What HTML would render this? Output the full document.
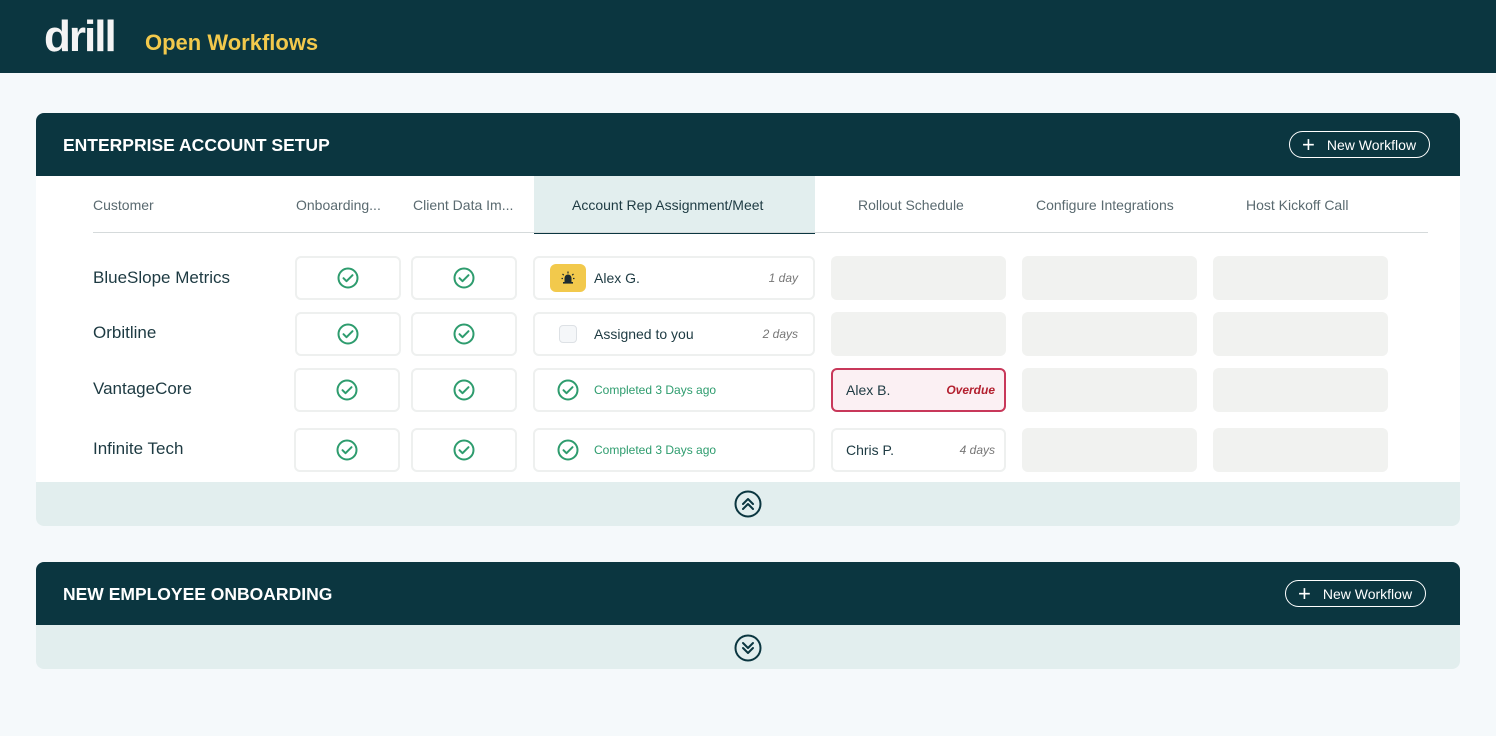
<!DOCTYPE html>
<html><head><style>
*{margin:0;padding:0;box-sizing:border-box}
body{width:1496px;height:736px;background:#f5f9fb;font-family:"Liberation Sans",sans-serif;position:relative;overflow:hidden;color:#1d3a42}
.a{position:absolute}
.top{left:0;top:0;width:1496px;height:73px;background:#0b3640}
.card{background:#fff;border-radius:8px;overflow:hidden}
.hd{background:#0b3640;color:#fff;font-weight:bold;font-size:19px;letter-spacing:.2px}
.btn{border:1.5px solid #fff;border-radius:14px;color:#fff;font-size:14px;height:27px;display:flex;align-items:center;padding-left:12px}
.th{font-size:14px;color:#5a6a70;top:176px;height:58px;line-height:58px}
.box{border:2px solid #eef0ef;border-radius:6px;background:#fff;display:flex;align-items:center;justify-content:center}
.e{background:#f1f2f0;border-radius:6px}
.lbl{font-size:17px;color:#1d3a42}
.sm{font-size:12px;font-style:italic;color:#777}
.band{background:#e2eeee}
</style></head><body>
<div class="a top"></div>
<div class="a" style="left:44px;top:12px;font-size:44px;font-weight:bold;color:#f4f4f4;letter-spacing:-2px">drill</div>
<div class="a" style="left:145px;top:30px;font-size:22px;font-weight:bold;color:#f2c94c">Open Workflows</div>

<div class="a card" style="left:36px;top:113px;width:1424px;height:413px"></div>
<div class="a hd" style="left:36px;top:113px;width:1424px;height:63px;border-radius:8px 8px 0 0"></div>
<div class="a" style="left:63px;top:135px;color:#fff;font-weight:bold;font-size:17.5px">ENTERPRISE ACCOUNT SETUP</div>
<div class="a btn" style="left:1289px;top:131px;width:141px"><span style="font-size:22px;font-weight:300;margin-right:12px;line-height:1">+</span>New Workflow</div>

<div class="a" style="left:534px;top:176px;width:281px;height:58px;background:#e2eeee;border-bottom:2px solid #0b3640"></div>
<div class="a" style="left:93px;top:232px;width:1335px;height:1px;background:#d5dadb"></div>
<div class="a th" style="left:93px">Customer</div>
<div class="a th" style="left:296px">Onboarding...</div>
<div class="a th" style="left:413px">Client Data Im...</div>
<div class="a th" style="left:572px;color:#1d3a42">Account Rep Assignment/Meet</div>
<div class="a th" style="left:858px">Rollout Schedule</div>
<div class="a th" style="left:1036px">Configure Integrations</div>
<div class="a th" style="left:1246px">Host Kickoff Call</div>

<svg width="0" height="0" style="position:absolute"><defs><g id="ck"><circle cx="11" cy="11" r="9.5" fill="none" stroke="#2e9c6e" stroke-width="2"/><path d="M6.5 11.2l3 3 6-6" fill="none" stroke="#2e9c6e" stroke-width="2" stroke-linecap="round" stroke-linejoin="round"/></g></defs></svg>

<div class="a lbl" style="left:93px;top:268px">BlueSlope Metrics</div>
<div class="a lbl" style="left:93px;top:323px">Orbitline</div>
<div class="a lbl" style="left:93px;top:379px">VantageCore</div>
<div class="a lbl" style="left:93px;top:439px">Infinite Tech</div>

<div class="a box" style="left:295px;top:256px;width:106px;height:44px"><svg width="22" height="22"><use href="#ck"/></svg></div>
<div class="a box" style="left:411px;top:256px;width:106px;height:44px"><svg width="22" height="22"><use href="#ck"/></svg></div>
<div class="a box" style="left:295px;top:312px;width:106px;height:44px"><svg width="22" height="22"><use href="#ck"/></svg></div>
<div class="a box" style="left:411px;top:312px;width:106px;height:44px"><svg width="22" height="22"><use href="#ck"/></svg></div>
<div class="a box" style="left:294px;top:368px;width:106px;height:44px"><svg width="22" height="22"><use href="#ck"/></svg></div>
<div class="a box" style="left:411px;top:368px;width:106px;height:44px"><svg width="22" height="22"><use href="#ck"/></svg></div>
<div class="a box" style="left:294px;top:428px;width:106px;height:44px"><svg width="22" height="22"><use href="#ck"/></svg></div>
<div class="a box" style="left:411px;top:428px;width:106px;height:44px"><svg width="22" height="22"><use href="#ck"/></svg></div>

<div class="a box" style="left:533px;top:256px;width:282px;height:44px;justify-content:flex-start">
 <div style="margin-left:15px;width:36px;height:28px;background:#f2c94c;border-radius:6px;display:flex;align-items:center;justify-content:center"><svg width="16" height="16" viewBox="0 0 16 16"><path d="M4.5 12V8a3.5 3.5 0 0 1 7 0v4z" fill="#1d2b30"/><rect x="3" y="12" width="10" height="1.6" fill="#1d2b30"/><path d="M8 1.5v2M2.5 4l1.3 1.2M13.5 4l-1.3 1.2M1.5 8.5h1.5M13 8.5h1.5" stroke="#1d2b30" stroke-width="1.2"/></svg></div>
 <span style="margin-left:8px;font-size:14px">Alex G.</span><span class="sm" style="margin-left:auto;margin-right:15px">1 day</span></div>
<div class="a box" style="left:533px;top:312px;width:282px;height:44px;justify-content:flex-start">
 <div style="margin-left:24px;width:18px;height:18px;border:1.5px solid #dde1e5;border-radius:4px;background:#f5f7f9"></div>
 <span style="margin-left:17px;font-size:14px">Assigned to you</span><span class="sm" style="margin-left:auto;margin-right:15px">2 days</span></div>
<div class="a box" style="left:533px;top:368px;width:282px;height:44px;justify-content:flex-start">
 <svg width="22" height="22" style="margin-left:22px"><use href="#ck"/></svg><span style="margin-left:15px;font-size:12px;color:#2e9c6e">Completed 3 Days ago</span></div>
<div class="a box" style="left:533px;top:428px;width:282px;height:44px;justify-content:flex-start">
 <svg width="22" height="22" style="margin-left:22px"><use href="#ck"/></svg><span style="margin-left:15px;font-size:12px;color:#2e9c6e">Completed 3 Days ago</span></div>

<div class="a e" style="left:831px;top:256px;width:175px;height:44px"></div>
<div class="a e" style="left:831px;top:312px;width:175px;height:44px"></div>
<div class="a box" style="left:831px;top:368px;width:175px;height:44px;background:#fbf0f3;border-color:#c8385a;justify-content:flex-start"><span style="margin-left:13px;font-size:14px">Alex B.</span><span style="margin-left:auto;margin-right:9px;font-size:12px;font-weight:bold;font-style:italic;color:#b3202f">Overdue</span></div>
<div class="a box" style="left:831px;top:428px;width:175px;height:44px;justify-content:flex-start"><span style="margin-left:13px;font-size:14px">Chris P.</span><span class="sm" style="margin-left:auto;margin-right:9px">4 days</span></div>

<div class="a e" style="left:1022px;top:256px;width:175px;height:44px"></div>
<div class="a e" style="left:1022px;top:312px;width:175px;height:44px"></div>
<div class="a e" style="left:1022px;top:368px;width:175px;height:44px"></div>
<div class="a e" style="left:1022px;top:428px;width:175px;height:44px"></div>
<div class="a e" style="left:1213px;top:256px;width:175px;height:44px"></div>
<div class="a e" style="left:1213px;top:312px;width:175px;height:44px"></div>
<div class="a e" style="left:1213px;top:368px;width:175px;height:44px"></div>
<div class="a e" style="left:1213px;top:428px;width:175px;height:44px"></div>

<div class="a band" style="left:36px;top:482px;width:1424px;height:44px;border-radius:0 0 8px 8px"></div>
<svg class="a" style="left:734px;top:490px" width="28" height="28" viewBox="0 0 28 28"><circle cx="14" cy="14" r="12.5" fill="none" stroke="#0b3640" stroke-width="2"/><path d="M9 14l5-5 5 5M9 19l5-5 5 5" fill="none" stroke="#0b3640" stroke-width="2" stroke-linecap="round" stroke-linejoin="round"/></svg>

<div class="a hd" style="left:36px;top:562px;width:1424px;height:63px;border-radius:8px 8px 0 0"></div>
<div class="a" style="left:63px;top:584px;color:#fff;font-weight:bold;font-size:17.5px">NEW EMPLOYEE ONBOARDING</div>
<div class="a btn" style="left:1285px;top:580px;width:141px"><span style="font-size:22px;font-weight:300;margin-right:12px;line-height:1">+</span>New Workflow</div>
<div class="a band" style="left:36px;top:625px;width:1424px;height:44px;border-radius:0 0 8px 8px"></div>
<svg class="a" style="left:734px;top:634px" width="28" height="28" viewBox="0 0 28 28"><circle cx="14" cy="14" r="12.5" fill="none" stroke="#0b3640" stroke-width="2"/><path d="M9 9l5 5 5-5M9 14l5 5 5-5" fill="none" stroke="#0b3640" stroke-width="2" stroke-linecap="round" stroke-linejoin="round"/></svg>
</body></html>
